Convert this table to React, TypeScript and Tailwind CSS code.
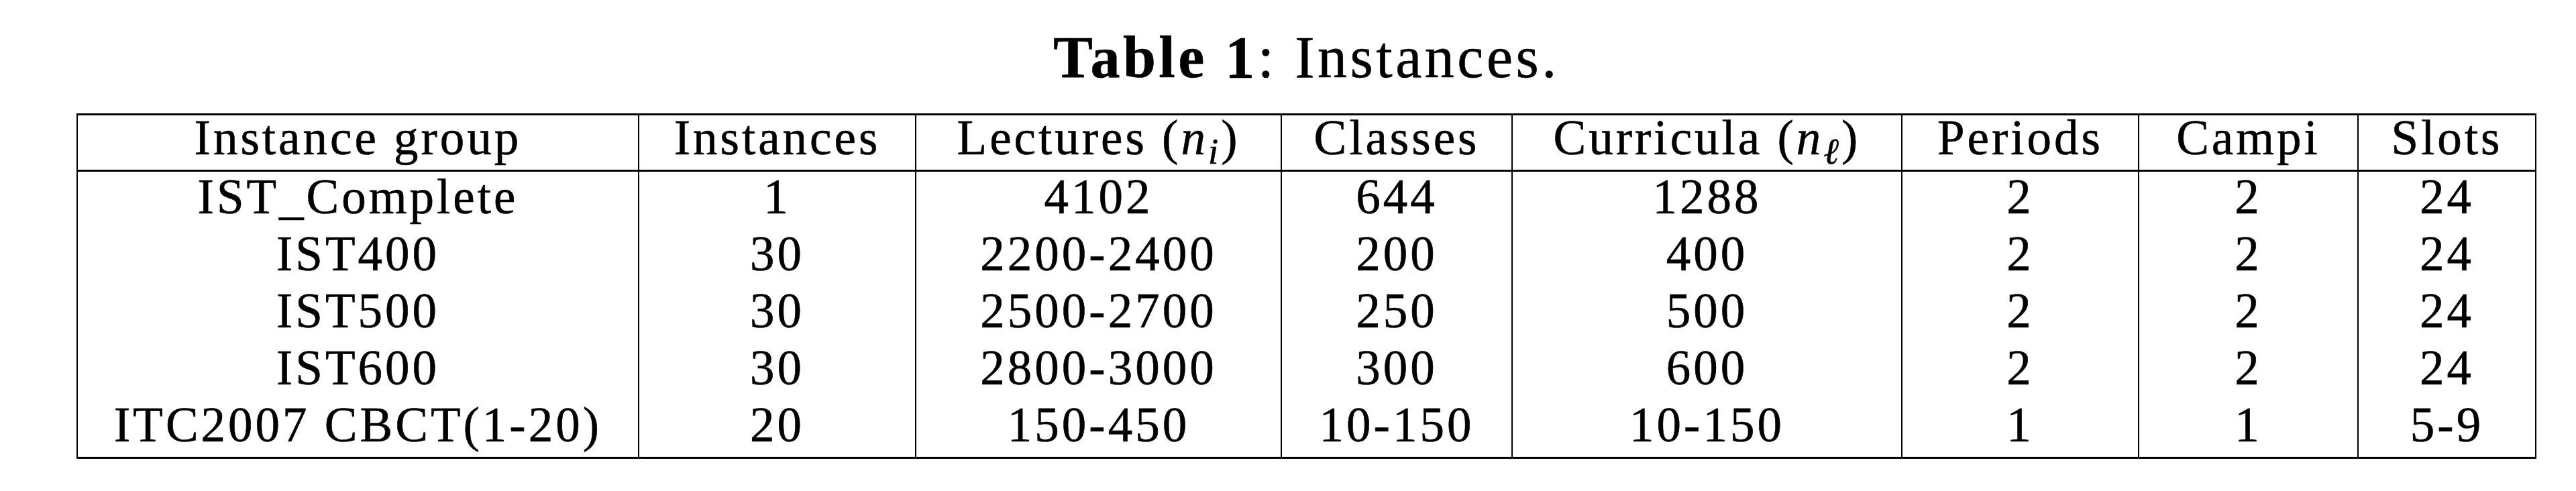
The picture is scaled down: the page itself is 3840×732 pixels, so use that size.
import React from 'react';

const cols = ['Instance group', 'Instances', 'Lectures', 'Classes', 'Curricula', 'Periods', 'Campi', 'Slots'];

const rows = [
  ['IST_Complete', '1', '4102', '644', '1288', '2', '2', '24'],
  ['IST400', '30', '2200-2400', '200', '400', '2', '2', '24'],
  ['IST500', '30', '2500-2700', '250', '500', '2', '2', '24'],
  ['IST600', '30', '2800-3000', '300', '600', '2', '2', '24'],
  ['ITC2007 CBCT(1-20)', '20', '150-450', '10-150', '10-150', '1', '1', '5-9'],
];

const grid = 'grid grid-cols-[835px_413px_545px_344px_581px_353px_327px_265px]';

const headerLabel = (c: string) => {
  if (c === 'Lectures') {
    return (
      <>
        Lectures (<i>n</i><sub className="italic">i</sub>)
      </>
    );
  }
  if (c === 'Curricula') {
    return (
      <>
        Curricula (<i>n</i><sub className="italic">ℓ</sub>)
      </>
    );
  }
  return c;
};

export default function App() {
  return (
    <div
      className="bg-white text-black pl-[114px] w-[3840px] h-[732px] [-webkit-text-stroke:0.6px_black]"
      style={{ fontFamily: '"Liberation Serif", "Times New Roman", serif' }}
    >
      <div className="w-[3667px]">
        <div className="pt-[42px] h-[130px] text-center text-[88px] leading-[88px] tracking-[4.5px]">
          <span className="font-bold">Table 1</span>: Instances.
        </div>

        <div className="mt-[39px] border-x-2 border-y-[3px] border-black text-[73px] tracking-[4px]">
          <div className={`${grid} h-[84px] border-b-[3px] border-black`}>
            {cols.map((c, i) => (
              <div
                key={c}
                className={`text-center whitespace-nowrap leading-[67px] ${i > 0 ? 'border-l-2 border-black' : ''}`}
              >
                {headerLabel(c)}
              </div>
            ))}
          </div>

          {rows.map((r) => (
            <div key={r[0]} className={`${grid} h-[85px]`}>
              {r.map((v, i) => (
                <div
                  key={i}
                  className={`text-center whitespace-nowrap leading-[75px] ${i > 0 ? 'border-l-2 border-black' : ''}`}
                >
                  {v}
                </div>
              ))}
            </div>
          ))}
        </div>
      </div>
    </div>
  );
}
